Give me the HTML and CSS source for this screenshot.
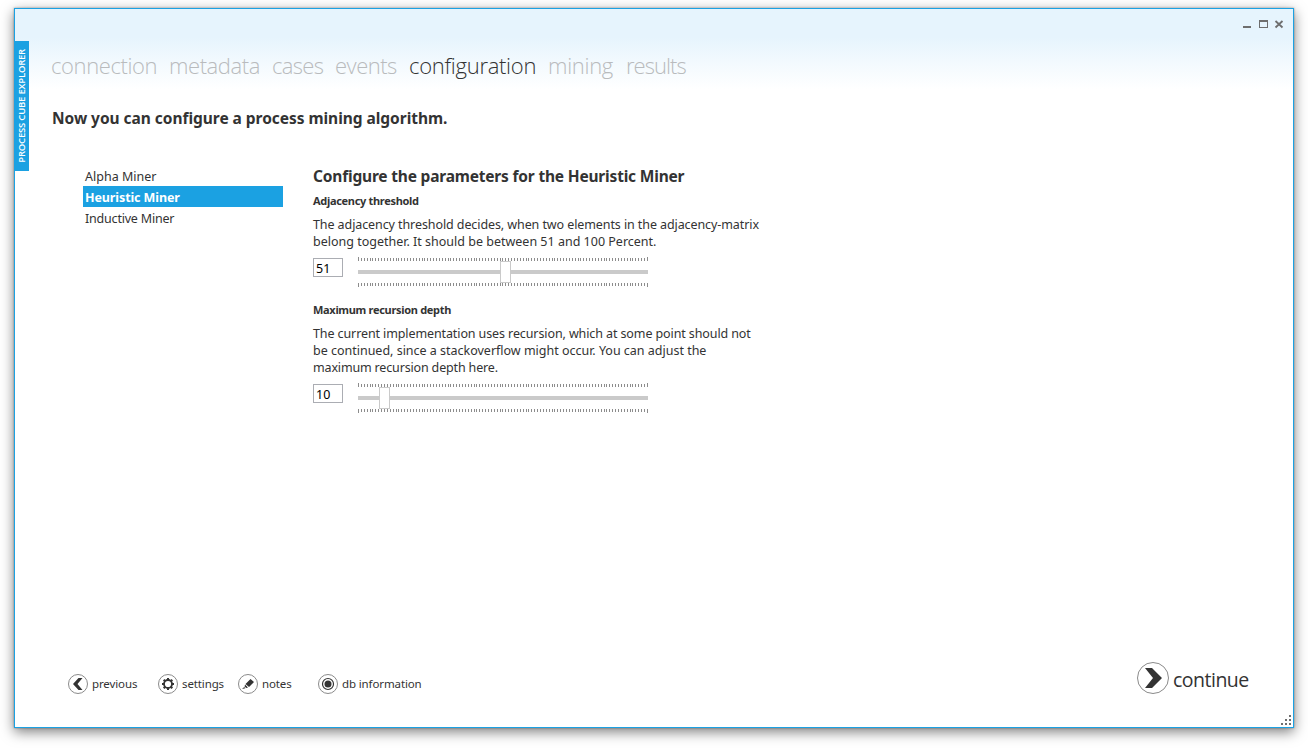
FILE: index.html
```html
<!DOCTYPE html>
<html lang="en">
<head>
<meta charset="utf-8">
<title>Process Cube Explorer</title>
<link rel="stylesheet" href="styles.css">
</head>
<body>
<svg class="defs" aria-hidden="true">
  <defs>
    <pattern id="minor" width="26" height="6" patternUnits="userSpaceOnUse">
      <path d="M0 1h1v3h-1zM3 1h1v3h-1zM6 1h1v3h-1zM9 1h1v3h-1zM12 1h1v3h-1zM14 1h1v3h-1zM17 1h1v3h-1zM20 1h1v3h-1zM23 1h1v3h-1z" fill="#8c8c8c"/>
    </pattern>
    <symbol id="ticks" viewBox="0 0 290 4">
      <rect width="290" height="4" fill="url(#minor)"/>
      <path d="M0 0h1v4H0zM289 0h1v4h-1z" fill="#8c8c8c"/>
    </symbol>
  </defs>
</svg>
<div class="window">
  <div class="tab"><span>PROCESS CUBE EXPLORER</span></div>
  <header class="titlebar">
    <svg width="42" height="10" viewBox="0 0 42 10" fill="#6e6e6e" shape-rendering="crispEdges">
      <path d="M0 7h8v2H0z"/>
      <path d="M16 1h9v8h-9zM17 3v5h7V3z" fill-rule="evenodd"/>
      <path d="M32.500 2l7 6.500M39.500 2l-7 6.500" fill="none" stroke="#6e6e6e" stroke-width="1.800" shape-rendering="auto"/>
    </svg>
  </header>
  <nav class="steps">
    <a class="s1">connection</a><a class="s2">metadata</a><a class="s3">cases</a><a class="s4">events</a><a class="s5 current">configuration</a><a class="s6">mining</a><a class="s7">results</a>
  </nav>
  <h1 class="intro">Now you can configure a process mining algorithm.</h1>
  <main class="content">
    <ul class="miners">
      <li>Alpha Miner</li>
      <li class="selected">Heuristic Miner</li>
      <li class="inductive">Inductive Miner</li>
    </ul>
    <section class="params">
      <h2>Configure the parameters for the Heuristic Miner</h2>
      <h3 class="h-adj">Adjacency threshold</h3>
      <p><span class="l1">The adjacency threshold decides, when two elements in the adjacency-matrix</span><br><span class="l2">belong together. It should be between 51 and 100 Percent.</span></p>
      <div class="control">
        <div class="value">51</div>
        <div class="slider">
          <svg class="scale"><use href="#ticks"/></svg>
          <div class="track"><div class="thumb" style="left:142px"></div></div>
          <svg class="scale below"><use href="#ticks"/></svg>
        </div>
      </div>
      <h3 class="h-max">Maximum recursion depth</h3>
      <p><span class="l3">The current implementation uses recursion, which at some point should not</span><br><span class="l4">be continued, since a stackoverflow might occur. You can adjust the</span><br><span class="l5">maximum recursion depth here.</span></p>
      <div class="control">
        <div class="value">10</div>
        <div class="slider">
          <svg class="scale"><use href="#ticks"/></svg>
          <div class="track"><div class="thumb" style="left:21px"></div></div>
          <svg class="scale below"><use href="#ticks"/></svg>
        </div>
      </div>
    </section>
  </main>
  <footer class="footer">
    <a class="action previous"><svg width="20" height="20" viewBox="0 0 20 20"><circle cx="10" cy="10" r="9.500" fill="none" stroke="#8a8a8a"/><path d="M10.500 4h4l-5 6 5 6h-4L5 10z" fill="#333"/></svg><span>previous</span></a>
    <a class="action settings"><svg width="20" height="20" viewBox="0 0 20 20"><circle cx="10" cy="10" r="9.500" fill="none" stroke="#8a8a8a"/><circle cx="10" cy="10" r="4" fill="none" stroke="#333" stroke-width="1.800"/><path d="M10 4v2M10 14v2M4 10h2M14 10h2M5.700 5.700l1.500 1.500M12.800 12.800l1.500 1.500M5.700 14.300l1.500-1.500M12.800 7.200l1.500-1.500" stroke="#333" stroke-width="2"/></svg><span>settings</span></a>
    <a class="action notes"><svg width="20" height="20" viewBox="0 0 20 20"><circle cx="10" cy="10" r="9.500" fill="none" stroke="#8a8a8a"/><path d="M12.500 5l3.500 3-5 5-3.500-3zM7 10.500l3 3-1.800.5-1.600-1.500zM6.200 13l1.200 1.200L4 15z" fill="#333"/></svg><span>notes</span></a>
    <a class="action db"><svg width="20" height="20" viewBox="0 0 20 20"><circle cx="10" cy="10" r="9.500" fill="none" stroke="#8a8a8a"/><circle cx="10" cy="10" r="5.500" fill="none" stroke="#333" stroke-width="1.200"/><circle cx="10" cy="10" r="3.500" fill="#333"/></svg><span>db information</span></a>
    <a class="continue"><svg width="32" height="32" viewBox="0 0 32 32"><circle cx="16" cy="16" r="15.500" fill="none" stroke="#8a8a8a"/><path d="M8 6h7l10 10-10 10H8l8-10z" fill="#333"/></svg><span>continue</span></a>
  </footer>
  <svg class="grip" width="10" height="10" viewBox="0 0 10 10" fill="#6e6e6e" shape-rendering="crispEdges"><path d="M8 0h2v2H8zM4 4h2v2H4zM8 4h2v2H8zM0 8h2v2H0zM4 8h2v2H4zM8 8h2v2H8z"/></svg>
</div>
</body>
</html>
```
FILE: styles.css
```css
* { box-sizing: border-box; margin: 0; padding: 0; }
body { width: 1308px; height: 748px; padding: 8px 14px; overflow: hidden; background: #fff; color: #333; font: 12px/17px "Noto Sans", "Open Sans", sans-serif; }
.defs { position: absolute; width: 0; height: 0; }
svg { display: block; flex: none; }
.window { position: relative; display: flex; flex-direction: column; width: 1280px; height: 720px; border: 1px solid #1ba1e2; background: linear-gradient(#e6f4fd 0, #e6f4fd 28px, #fff 80px); box-shadow: 0 4px 12px rgba(0,0,0,.5), 0 0 2px rgba(0,0,0,.35); }
.tab { position: absolute; left: 0; top: 32px; width: 14px; height: 130px; background: #1ba1e2; color: #fff; display: flex; align-items: center; justify-content: center; }
.tab span { writing-mode: vertical-rl; transform: rotate(180deg); font: 600 9.500px/14px "Open Sans", sans-serif; letter-spacing: -.2px; white-space: nowrap; }
.titlebar { height: 32px; display: flex; justify-content: flex-end; padding: 10px 8px 0 0; }
.steps { display: flex; height: 50px; padding: 7px 0 0 36px; color: #b9bbbd; font: 300 22px/34px "Open Sans", sans-serif; }
.steps .current { color: #333; }
.steps a { white-space: nowrap; flex: none; }
.s1 { width: 118px; letter-spacing: -.4px; }
.s2 { width: 103px; letter-spacing: -.42px; }
.s3 { width: 63px; letter-spacing: -.7px; }
.s4 { width: 74px; letter-spacing: -.5px; }
.s5 { width: 139px; letter-spacing: -.28px; }
.s6 { width: 78px; letter-spacing: -.3px; }
.s7 { letter-spacing: -.95px; }
.intro { height: 48px; margin-left: 37px; padding-top: 16px; font-size: 15.500px; line-height: 22px; font-weight: 700; letter-spacing: -.04px; white-space: nowrap; }
.content { display: flex; padding: 26px 0 0 68px; flex: 1; }
.miners { list-style: none; width: 200px; margin-right: 30px; }
.miners li { height: 21px; padding: 1px 2px 0; line-height: 21px; font-size: 12.500px; white-space: nowrap; }
.miners .selected { background: #1ba1e2; color: #fff; font-weight: 700; letter-spacing: -.1px; }
.miners .inductive { letter-spacing: -.2px; }
.params { width: 460px; white-space: nowrap; }
.params h2 { font-size: 15.500px; line-height: 22px; font-weight: 700; letter-spacing: -.19px; }
.params h3 { font-size: 11px; line-height: 15px; font-weight: 700; letter-spacing: -.31px; margin: 6px 0 8px; }
.params p { font-size: 12.500px; line-height: 17px; }
.l1 { letter-spacing: -.09px; }
.l3 { letter-spacing: -.105px; }
.l4 { letter-spacing: -.01px; }
.l5 { letter-spacing: -.16px; }
.control { display: flex; gap: 15px; height: 36px; padding-top: 7px; }
.value { width: 30px; height: 19px; margin-top: 1px; border: 1px solid #abadb3; background: #fff; color: #000; line-height: 18px; padding: 1px 2px; font-size: 12.500px; }
.slider { width: 290px; height: 30px; display: flex; flex-direction: column; justify-content: space-between; }
.scale { width: 290px; height: 4px; }
.below { transform: scaleY(-1); }
.track { position: relative; height: 4px; background: #cacaca; }
.thumb { position: absolute; top: -9px; width: 11px; height: 22px; border: 1px solid #cacaca; background: #fff; }
.params .h-max { margin-top: 16px; }
.footer { display: flex; align-items: center; height: 66px; margin-bottom: 10px; padding-left: 53px; font-size: 11.500px; letter-spacing: -.12px; }
.action { display: flex; align-items: center; gap: 4px; white-space: nowrap; }
.action span { padding-bottom: 2px; }
.previous { width: 90px; }
.settings, .notes { width: 80px; }
.continue { display: flex; align-items: center; gap: 4px; margin: -12px 0 0 auto; width: 156px; font: 19.500px/28px "Open Sans", sans-serif; letter-spacing: -.5px; }
.continue span { padding-top: 3px; }
.grip { position: absolute; right: 2px; bottom: 2px; }
```
